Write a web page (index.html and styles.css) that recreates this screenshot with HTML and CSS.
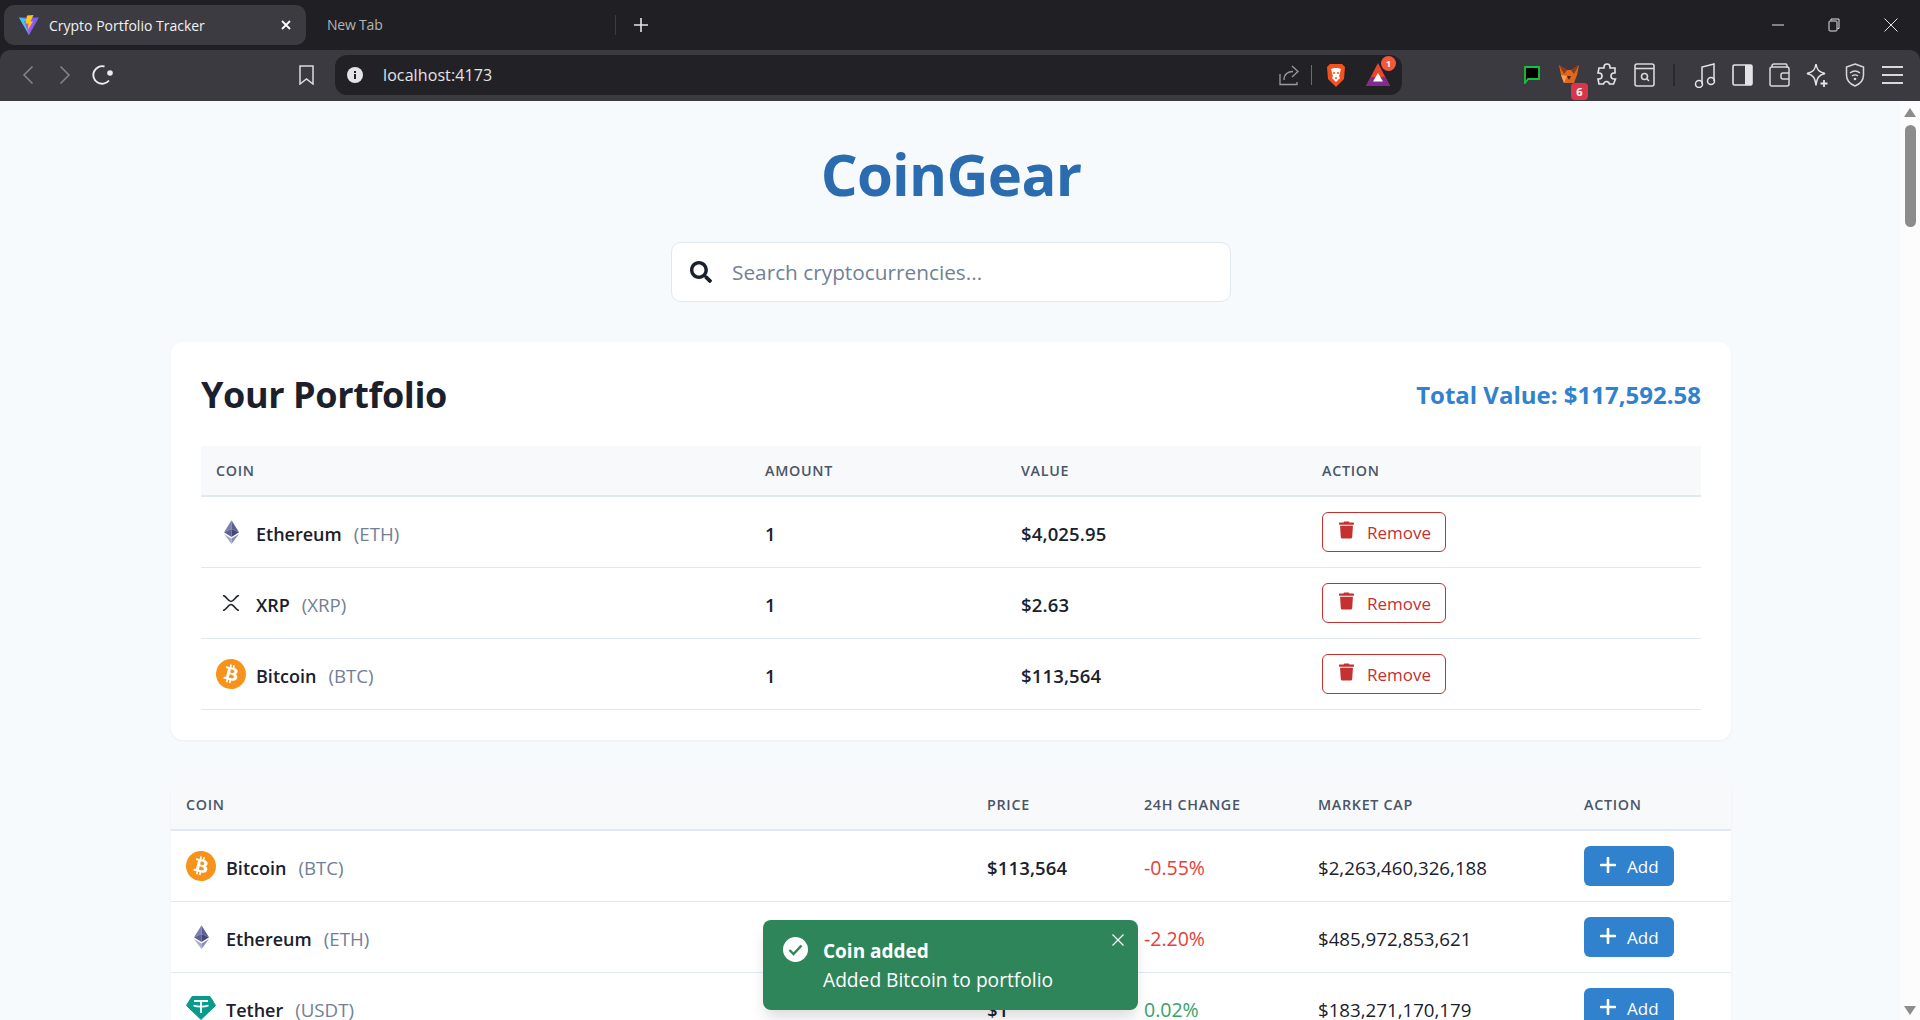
FILE: index.html
```html
<!DOCTYPE html>
<html lang="en">
<head>
	<meta charset="UTF-8">
	<title>Crypto Portfolio Tracker</title>
	<link rel="stylesheet" href="styles.css">
</head>
<body>
	<svg class="defs" width="0" height="0">
		<symbol id="eth" viewBox="0 0 24 38">
			<polygon points="12,0 12,14 0,19.5" fill="#7d80ad"/>
			<polygon points="12,0 24,19.5 12,14" fill="#5d6091"/>
			<polygon points="0,19.5 12,14 12,27" fill="#5d6091"/>
			<polygon points="24,19.5 12,14 12,27" fill="#43477a"/>
			<polygon points="0,22 12,29.5 12,38" fill="#a9abcb"/>
			<polygon points="24,22 12,29.5 12,38" fill="#8a8db6"/>
		</symbol>
		<symbol id="btc" viewBox="0 0 24 24">
			<path fill="#f7931a" d="M23.638 14.904c-1.602 6.43-8.113 10.34-14.542 8.736C2.67 22.05-1.244 15.525.362 9.105 1.962 2.67 8.475-1.243 14.9.358c6.43 1.605 10.342 8.115 8.738 14.548v-.002zm-6.35-4.613c.24-1.59-.974-2.45-2.64-3.03l.54-2.153-1.315-.33-.525 2.107c-.345-.087-.705-.167-1.064-.25l.526-2.127-1.32-.33-.54 2.165c-.285-.067-.565-.132-.84-.2l-1.815-.45-.35 1.407s.975.225.955.236c.535.136.63.486.615.766l-1.477 5.92c-.075.166-.24.406-.614.314.015.02-.96-.24-.96-.24l-.66 1.51 1.71.426.93.242-.54 2.19 1.32.327.54-2.17c.36.1.705.19 1.05.273l-.51 2.154 1.32.33.545-2.19c2.24.427 3.93.257 4.64-1.774.57-1.637-.03-2.58-1.217-3.196.854-.193 1.5-.76 1.68-1.93h.01zm-3.01 4.22c-.404 1.64-3.157.75-4.05.53l.72-2.9c.896.23 3.757.67 3.33 2.37zm.41-4.24c-.37 1.49-2.662.735-3.405.55l.654-2.64c.744.18 3.137.524 2.75 2.084v.006z"/>
		</symbol>
		<symbol id="trash" viewBox="0 0 448 512">
			<path fill="currentColor" d="M432 32H312l-9.4-18.7A24 24 0 0 0 281.1 0H166.8a23.72 23.72 0 0 0-21.4 13.3L136 32H16A16 16 0 0 0 0 48v32a16 16 0 0 0 16 16h416a16 16 0 0 0 16-16V48a16 16 0 0 0-16-16zM53.2 467a48 48 0 0 0 47.9 45h245.8a48 48 0 0 0 47.9-45L416 128H32z"/>
		</symbol>
		<symbol id="plus" viewBox="0 0 16 16">
			<path d="M8 1v14M1 8h14" stroke="currentColor" stroke-width="2.6" stroke-linecap="round" fill="none"/>
		</symbol>
	</svg>

	<div class="tabstrip">
		<div class="tab">
			<svg class="favicon" width="20" height="20" viewBox="0 0 20 20">
				<polygon points="0,2.5 20,2.5 10,20" fill="#7c5cf5"/>
				<polygon points="0,2.5 10,4.5 10,20" fill="#41c7f5"/>
				<polygon points="5,6 10,20 15,6" fill="#a855f7"/>
				<polygon points="8,0.5 14.5,0 11.5,6.5 14,6.5 8.5,15 9.5,8.5 6.5,8.5" fill="#ffc517"/>
			</svg>
			<span class="tab-title">Crypto Portfolio Tracker</span>
			<svg class="tab-close" width="10" height="10" viewBox="0 0 10 10"><path d="M1 1l8 8M9 1l-8 8" stroke="#fff" stroke-width="1.8"/></svg>
		</div>
		<div class="tab-new">New Tab</div>
		<svg class="new-btn" width="14" height="14" viewBox="0 0 14 14"><path d="M7 0v14M0 7h14" stroke="#e4e4e7" stroke-width="1.6"/></svg>
		<div class="win-btns">
			<svg class="win-btn" width="12" height="12" viewBox="0 0 12 12"><path d="M0 6h12" stroke="#e4e4e7"/></svg>
			<svg class="win-btn" width="12" height="14" viewBox="0 0 12 14"><path d="M3 2.5V1h8v9.5h-1.5" stroke="#e4e4e7" fill="none"/><rect x="1" y="3" width="8" height="10" rx="1" stroke="#e4e4e7" fill="none"/></svg>
			<svg class="win-btn" width="14" height="14" viewBox="0 0 14 14"><path d="M.5.5l13 13M13.5.5l-13 13" stroke="#e4e4e7"/></svg>
		</div>
	</div>

	<div class="toolbar">
		<div class="tool-btn"><svg width="12" height="20" viewBox="0 0 12 20"><path d="M10.5 1.5L2 10l8.500 8.500" stroke="#85858a" stroke-width="1.500" fill="none"/></svg></div>
		<div class="tool-btn"><svg width="12" height="20" viewBox="0 0 12 20"><path d="M1.500 1.500L10 10l-8.500 8.500" stroke="#85858a" stroke-width="1.500" fill="none"/></svg></div>
		<div class="tool-btn"><svg width="22" height="20" viewBox="0 0 22 20"><path d="M17 15.500A8.800 8.800 0 1 1 12.500 1.500" stroke="#ececee" stroke-width="1.900" fill="none"/><circle cx="18" cy="8" r="2.800" fill="#ececee"/></svg></div>
		<div class="tool-btn bookmark"><svg width="15" height="20" viewBox="0 0 15 20"><path d="M1 1h13v18l-6.500-5L1 19z" stroke="#dcdcde" stroke-width="1.500" fill="none"/></svg></div>
		<div class="urlbar">
			<svg class="info" width="16" height="16" viewBox="0 0 16 16"><circle cx="8" cy="8" r="8" fill="#e4e4e7"/><rect x="7" y="7" width="2" height="5" fill="#222226"/><rect x="7" y="4" width="2" height="2" fill="#222226"/></svg>
			<span class="url-text">localhost:4173</span>
			<svg class="share" width="20" height="21" viewBox="0 0 20 21"><path d="M1 9v10.500h17V17" stroke="#9a9a9f" stroke-width="1.300" fill="none"/><path d="M5 15c0-6 4-8.500 9-8.500M13 1l6 5.500-6 5.500" stroke="#9a9a9f" stroke-width="1.300" fill="none"/></svg>
			<span class="url-sep"></span>
			<svg class="lion" width="20" height="24" viewBox="0 0 20 24">
				<path d="M4 1h12l3 3-1 12-8 8-8-8L1 4z" fill="#f1521f"/>
				<path d="M5 6l3-1h4l3 1-1 4-1 3 1 2-4 4-4-4 1-2-1-3z" fill="#fff"/>
				<path d="M7 10h2M11 10h2M9 15h2" stroke="#f1521f" stroke-width="1.300"/>
			</svg>
			<div class="bat">
				<svg width="24" height="24" viewBox="0 0 24 24">
					<polygon points="12,0 24,23 0,23" fill="#e8472e"/>
					<polygon points="0,23 24,23 19,14 5,14" fill="#7e2d8c"/>
					<polygon points="12,10 17,18.500 7,18.500" fill="#fff"/>
				</svg>
				<span class="bat-count">1</span>
			</div>
		</div>
		<div class="tool-right">
			<div class="tool-btn"><svg width="16" height="18" viewBox="0 0 16 18"><path d="M1 1h14v12H4l-3 4z" fill="#000" stroke="#16c23c" stroke-width="1.800"/></svg></div>
			<div class="tool-btn fox">
				<svg width="20" height="20" viewBox="0 0 20 20">
					<polygon points="0,0 8,5 12,5 20,0 18,10 15,18 5,18 2,10" fill="#e2661b"/>
					<polygon points="0,0 8,5 5,9" fill="#8f3a18"/>
					<polygon points="20,0 12,5 15,9" fill="#8f3a18"/>
					<polygon points="2,10 8,11 5,18" fill="#f6a05c"/>
					<polygon points="8,11 12,11 10,15" fill="#3a2a20"/>
				</svg>
				<span class="fox-count">6</span>
			</div>
			<div class="tool-btn"><svg width="22" height="24" viewBox="0 0 22 24"><path d="M8 4a3 3 0 0 1 6 0v1h5v5h-1a3 3 0 0 0 0 6h1.500l-2 5h-4a3 3 0 0 0-5.500-1l-.5 1H3l-1-5h1a3 3 0 0 0 0-6H2l1-5h5z" stroke="#e4e4e7" stroke-width="1.600" fill="none"/></svg></div>
			<div class="tool-btn"><svg width="21" height="24" viewBox="0 0 21 24"><rect x="1" y="1" width="19" height="22" rx="2" stroke="#d8d8da" stroke-width="1.600" fill="none"/><path d="M1 5.500h19" stroke="#d8d8da" stroke-width="1.600"/><circle cx="10.500" cy="13.500" r="3" stroke="#d8d8da" stroke-width="1.600" fill="none"/><path d="M13 16l2 2" stroke="#d8d8da" stroke-width="1.600"/></svg></div>
			<span class="tool-sep"></span>
			<div class="tool-btn"><svg width="22" height="26" viewBox="0 0 22 26"><circle cx="5" cy="22" r="3.500" stroke="#e4e4e7" stroke-width="1.500" fill="none"/><circle cx="17" cy="19" r="3.500" stroke="#e4e4e7" stroke-width="1.500" fill="none"/><path d="M8 22V5l12-3v17" stroke="#e4e4e7" stroke-width="1.500" fill="none"/></svg></div>
			<div class="tool-btn"><svg width="21" height="22" viewBox="0 0 21 22"><rect x="1" y="1" width="19" height="20" rx="1.500" stroke="#e4e4e7" stroke-width="1.600" fill="none"/><rect x="13" y="1" width="7" height="20" fill="#e4e4e7"/></svg></div>
			<div class="tool-btn"><svg width="21" height="24" viewBox="0 0 21 24"><path d="M3 4V3a2 2 0 0 1 2-2h12a2 2 0 0 1 1 2v2" stroke="#d8d8da" stroke-width="1.500" fill="none"/><rect x="1" y="4" width="19" height="19" rx="2" stroke="#d8d8da" stroke-width="1.500" fill="none"/><path d="M20 10h-6a2 2 0 0 0-2 2v2a2 2 0 0 0 2 2h6" stroke="#d8d8da" stroke-width="1.500" fill="none"/></svg></div>
			<div class="tool-btn"><svg width="23" height="25" viewBox="0 0 23 25"><path d="M10 1c1 6 3 8 9 9.500-6 1.500-8 4-9 12-1-8-3-10.500-9-12C7 9 9 7 10 1z" stroke="#e4e4e7" stroke-width="1.500" fill="none"/><path d="M18 17v7M14.500 20.500h7" stroke="#e4e4e7" stroke-width="1.800"/></svg></div>
			<div class="tool-btn"><svg width="20" height="24" viewBox="0 0 20 24"><path d="M10 1l8.500 3v8c0 5-3.500 9-8.500 11C5 21 1.500 17 1.500 12V4z" stroke="#d8d8da" stroke-width="1.500" fill="none"/><path d="M5 10c3-2.500 7-2.500 10 0M7 13c2-1.500 4-1.500 6 0" stroke="#d8d8da" stroke-width="1.400" fill="none"/><circle cx="10" cy="16" r="1.300" fill="#d8d8da"/></svg></div>
			<div class="tool-btn"><svg width="21" height="18" viewBox="0 0 21 18"><path d="M0 1h21M0 9h21M0 17h21" stroke="#d8d8da" stroke-width="1.800"/></svg></div>
		</div>
	</div>

	<div class="viewport">
		<div class="page">
			<h1 class="brand">CoinGear</h1>

			<div class="search">
				<svg class="search-icon" width="22" height="22" viewBox="0 0 512 512"><path fill="#1a202c" d="M505 442.7L405.3 343c-4.500-4.500-10.600-7-17-7H372c27.600-35.300 44-79.700 44-128C416 93.100 322.900 0 208 0S0 93.100 0 208s93.100 208 208 208c48.300 0 92.700-16.400 128-44v16.300c0 6.400 2.500 12.500 7 17l99.700 99.700c9.400 9.400 24.600 9.400 33.900 0l28.300-28.300c9.400-9.400 9.400-24.600.1-34zM208 336c-70.700 0-128-57.200-128-128 0-70.700 57.200-128 128-128 70.700 0 128 57.200 128 128 0 70.700-57.200 128-128 128z"/></svg>
				<input class="search-input" type="text" placeholder="Search cryptocurrencies...">
			</div>

			<section class="portfolio">
				<div class="portfolio-head">
					<h2 class="portfolio-title">Your Portfolio</h2>
					<div class="portfolio-total">Total Value: $117,592.58</div>
				</div>
				<table class="coins">
					<colgroup><col class="p1"><col class="p2"><col class="p3"><col class="p4"></colgroup>
					<thead>
						<tr><th>Coin</th><th>Amount</th><th>Value</th><th>Action</th></tr>
					</thead>
					<tbody>
						<tr>
							<td><div class="coin"><span class="coin-icon"><svg class="i-eth"><use href="#eth"/></svg></span><span class="coin-name">Ethereum</span><span class="coin-sym">(ETH)</span></div></td>
							<td class="strong">1</td>
							<td class="strong">$4,025.95</td>
							<td><button class="btn btn-remove"><svg class="i-trash"><use href="#trash"/></svg>Remove</button></td>
						</tr>
						<tr>
							<td><div class="coin"><span class="coin-icon"><svg width="18" height="16" viewBox="0 0 18 16"><path d="M1 .5C4 .5 6 6.500 9 6.500S14 .5 17 .5M1 15.500C4 15.500 6 9.500 9 9.500s5 6 8 6" stroke="#23292f" stroke-width="1.700" fill="none"/></svg></span><span class="coin-name">XRP</span><span class="coin-sym">(XRP)</span></div></td>
							<td class="strong">1</td>
							<td class="strong">$2.63</td>
							<td><button class="btn btn-remove"><svg class="i-trash"><use href="#trash"/></svg>Remove</button></td>
						</tr>
						<tr>
							<td><div class="coin"><span class="coin-icon"><svg class="i-btc"><use href="#btc"/></svg></span><span class="coin-name">Bitcoin</span><span class="coin-sym">(BTC)</span></div></td>
							<td class="strong">1</td>
							<td class="strong">$113,564</td>
							<td><button class="btn btn-remove"><svg class="i-trash"><use href="#trash"/></svg>Remove</button></td>
						</tr>
					</tbody>
				</table>
			</section>

			<section class="market">
				<table class="coins">
					<colgroup><col class="m1"><col class="m2"><col class="m3"><col class="m4"><col class="m5"></colgroup>
					<thead>
						<tr><th>Coin</th><th>Price</th><th>24h Change</th><th>Market Cap</th><th>Action</th></tr>
					</thead>
					<tbody>
						<tr>
							<td><div class="coin"><span class="coin-icon"><svg class="i-btc"><use href="#btc"/></svg></span><span class="coin-name">Bitcoin</span><span class="coin-sym">(BTC)</span></div></td>
							<td class="strong">$113,564</td>
							<td class="down">-0.55%</td>
							<td>$2,263,460,326,188</td>
							<td><button class="btn btn-add"><svg class="i-plus"><use href="#plus"/></svg>Add</button></td>
						</tr>
						<tr>
							<td><div class="coin"><span class="coin-icon"><svg class="i-eth"><use href="#eth"/></svg></span><span class="coin-name">Ethereum</span><span class="coin-sym">(ETH)</span></div></td>
							<td class="strong">$4,025.95</td>
							<td class="down">-2.20%</td>
							<td>$485,972,853,621</td>
							<td><button class="btn btn-add"><svg class="i-plus"><use href="#plus"/></svg>Add</button></td>
						</tr>
						<tr>
							<td><div class="coin"><span class="coin-icon"><svg width="30" height="24" viewBox="0 0 30 24"><path d="M6 .5h18l5.500 9L15 23.500.5 9.500z" fill="#089b8c" stroke="#089b8c" stroke-linejoin="round"/><path d="M8 5h14M15 5v12M7.500 9.500c4 1.500 11 1.500 15 0" stroke="#fff" stroke-width="1.800" fill="none"/></svg></span><span class="coin-name">Tether</span><span class="coin-sym">(USDT)</span></div></td>
							<td class="strong">$1</td>
							<td class="up">0.02%</td>
							<td>$183,271,170,179</td>
							<td><button class="btn btn-add"><svg class="i-plus"><use href="#plus"/></svg>Add</button></td>
						</tr>
					</tbody>
				</table>
			</section>

			<div class="toast">
				<svg class="toast-icon" width="25" height="25" viewBox="0 0 25 25"><circle cx="12.500" cy="12.500" r="12.500" fill="#fff"/><path d="M6.500 13l4 4 8-8.500" stroke="#2f855a" stroke-width="2.400" fill="none"/></svg>
				<div class="toast-body">
					<div class="toast-title">Coin added</div>
					<div class="toast-text">Added Bitcoin to portfolio</div>
				</div>
				<svg class="toast-close" width="12" height="12" viewBox="0 0 12 12"><path d="M.5.5l11 11M11.500.5l-11 11" stroke="#fff" stroke-width="1.200"/></svg>
			</div>
		</div>

		<div class="scrollbar">
			<span class="arrow arrow-up"></span>
			<span class="thumb"></span>
			<span class="arrow arrow-down"></span>
		</div>
	</div>
</body>
</html>
```

FILE: styles.css
```css
*{box-sizing: border-box;}
html,body{height: 100%;}
body{margin: 0;overflow: hidden;display: flex;flex-direction: column;background: #202024;font-family: "Open Sans","Noto Sans",sans-serif;color: #1a202c;}
.defs{position: absolute;}
svg{display: block;flex: none;}

/* browser frame */
.tabstrip{height: 50px;flex: none;display: flex;align-items: center;padding: 0 0 0 4px;background: #202024;}
.tab{width: 302px;height: 40px;display: flex;align-items: center;padding: 0 15px;background: #3b3b41;border-radius: 10px;}
.favicon{margin-right: 10px;}
.tab-title{flex: 1;font-size: 14px;color: #f2f2f3;}
.tab-new{width: 310px;height: 20px;line-height: 20px;padding-left: 21px;font-size: 14px;letter-spacing: -.2px;color: #b4b4b8;border-right: 1px solid #3b3b41;}
.new-btn{margin-left: 18px;}
.win-btns{margin-left: auto;display: flex;align-items: center;}
.win-btn{margin-right: 44px;}
.win-btn:last-child{margin-right: 22px;}

.toolbar{height: 51px;flex: none;display: flex;align-items: center;padding: 0 9px 1px;background: #3a3a40;border-radius: 10px 10px 0 0;}
.tool-btn{width: 37.500px;height: 36px;flex: none;display: flex;align-items: center;justify-content: center;position: relative;}
.bookmark{margin-left: 166px;}
.urlbar{width: 1067px;height: 40px;margin-left: 10px;display: flex;align-items: center;padding-left: 12px;background: #222226;border-radius: 12px;}
.url-text{margin-left: 20px;flex: 1;font-size: 16px;letter-spacing: .1px;color: #e4e4e7;}
.share{margin-right: 12px;}
.url-sep{width: 1px;height: 20px;background: #6b6b70;margin-right: 14px;}
.lion{margin-right: 20px;}
.bat{position: relative;margin-right: 12px;}
.bat-count{position: absolute;top: -7px;right: -6px;width: 15px;height: 15px;border-radius: 50%;background: #f1583c;color: #fff;font-size: 9px;font-weight: 700;line-height: 15px;text-align: center;}
.fox-count{position: absolute;right: 0;bottom: -7px;width: 17px;height: 17px;border-radius: 4px;background: #d9364a;color: #fff;font-size: 11px;font-weight: 700;line-height: 17px;text-align: center;}
.tool-right{margin-left: auto;display: flex;align-items: center;}
.tool-sep{width: 2px;height: 22px;margin: 0 11px 0 10px;background: #2a2a2e;}

/* page */
.viewport{flex: 1;display: flex;min-height: 0;}
.page{flex: 1;min-width: 0;position: relative;overflow: hidden;background: #f7fafd;padding: 0 169px 0 171px;}
.brand{margin: 29px 0 0;height: 112px;font-size: 58px;line-height: 88px;letter-spacing: -.7px;font-weight: 700;text-align: center;color: #2b6cb0;}
.search{width: 560px;height: 60px;margin: 0 auto 40px;display: flex;align-items: center;padding: 0 18px;background: #fff;border: 1px solid #e2e8f0;border-radius: 10px;}
.search-icon{margin-right: 20px;}
.search-input{flex: 1;border: 0;outline: 0;padding: 0;background: none;font: 20.800px "Open Sans","Noto Sans",sans-serif;color: #1a202c;}
.search-input::placeholder{color: #718096;opacity: 1;}

.portfolio{height: 398px;padding: 30px;background: #fff;border-radius: 12px;box-shadow: 0 1px 3px rgba(0,0,0,.05);margin-bottom: 40px;}
.portfolio-head{height: 74px;display: flex;align-items: flex-start;justify-content: space-between;}
.portfolio-title{margin: 0;font-size: 36px;line-height: 46px;letter-spacing: -.4px;font-weight: 700;}
.portfolio-total{font-size: 24px;line-height: 46px;font-weight: 700;color: #3182ce;}

.market{background: #fff;border-radius: 12px 12px 0 0;box-shadow: 0 1px 3px rgba(0,0,0,.05);}

.coins{width: 100%;border-collapse: collapse;table-layout: fixed;}
.coins th{height: 50px;padding: 0 15px;text-align: left;font-size: 14.300px;font-weight: 600;letter-spacing: .7px;text-transform: uppercase;color: #4a5568;background: #f7f9fb;border-bottom: 2px solid #e2e8f0;}
.coins td{height: 71px;padding: 4px 15px 0;font-size: 18.700px;border-bottom: 1px solid #e2e8f0;}
.p1{width: 549px;}
.p2{width: 256px;}
.p3{width: 301px;}
.m1{width: 801px;}
.m2{width: 157px;}
.m3{width: 174px;}
.m4{width: 266px;}
.coins .strong{font-size: 18.500px;letter-spacing: .15px;font-weight: 600;}
.coins .down{font-size: 19.500px;color: #e53e3e;}
.coins .up{font-size: 19.500px;color: #38a169;}

.coin{display: flex;align-items: center;}
.coin-icon{width: 30px;height: 30px;margin: -4px 10px 0 0;display: flex;align-items: center;justify-content: center;}
.i-eth{width: 15px;height: 24px;}
.i-btc{width: 30px;height: 30px;}
.coin-name{font-size: 18px;font-weight: 600;}
.coin-sym{margin-left: 12px;color: #718096;}

.btn{height: 40px;margin-top: -4px;display: flex;align-items: center;padding: 2px 15px 0;font: 17px "Open Sans","Noto Sans",sans-serif;border-radius: 6px;}
.btn-remove{width: 124px;padding: 2px 16px 0;color: #c53030;background: #fff;border: 1px solid #c53030;}
.btn-add{width: 90px;color: #fff;background: #3182ce;border: 0;}
.i-trash{width: 15px;height: 18px;margin: -5px 13px 0 0;}
.i-plus{width: 16px;height: 16px;margin: -4px 11px 0 1px;}

/* toast, lies over the table */
.toast{position: absolute;left: 50%;bottom: 10px;width: 375px;height: 90px;margin-left: -187px;display: flex;padding: 17px 20px;background: #2f855a;border-radius: 8px;box-shadow: 0 10px 15px -3px rgba(0,0,0,.15);color: #fff;}
.toast-icon{margin-right: 15px;}
.toast-title{font-size: 19px;line-height: 28px;font-weight: 700;}
.toast-text{font-size: 19.200px;line-height: 30px;}
.toast-close{position: absolute;top: 14px;right: 14px;}

.scrollbar{width: 20px;flex: none;position: relative;display: flex;flex-direction: column;align-items: center;background: #fcfcfc;}
.arrow{width: 0;height: 0;border-left: 6.500px solid transparent;border-right: 6.500px solid transparent;}
.arrow-up{margin-top: 7px;border-bottom: 9px solid #8c8c8c;}
.arrow-down{position: absolute;bottom: 5px;border-top: 9px solid #8c8c8c;}
.thumb{width: 11px;height: 102px;margin-top: 8px;background: #8c8c8c;border-radius: 6px;}
```
